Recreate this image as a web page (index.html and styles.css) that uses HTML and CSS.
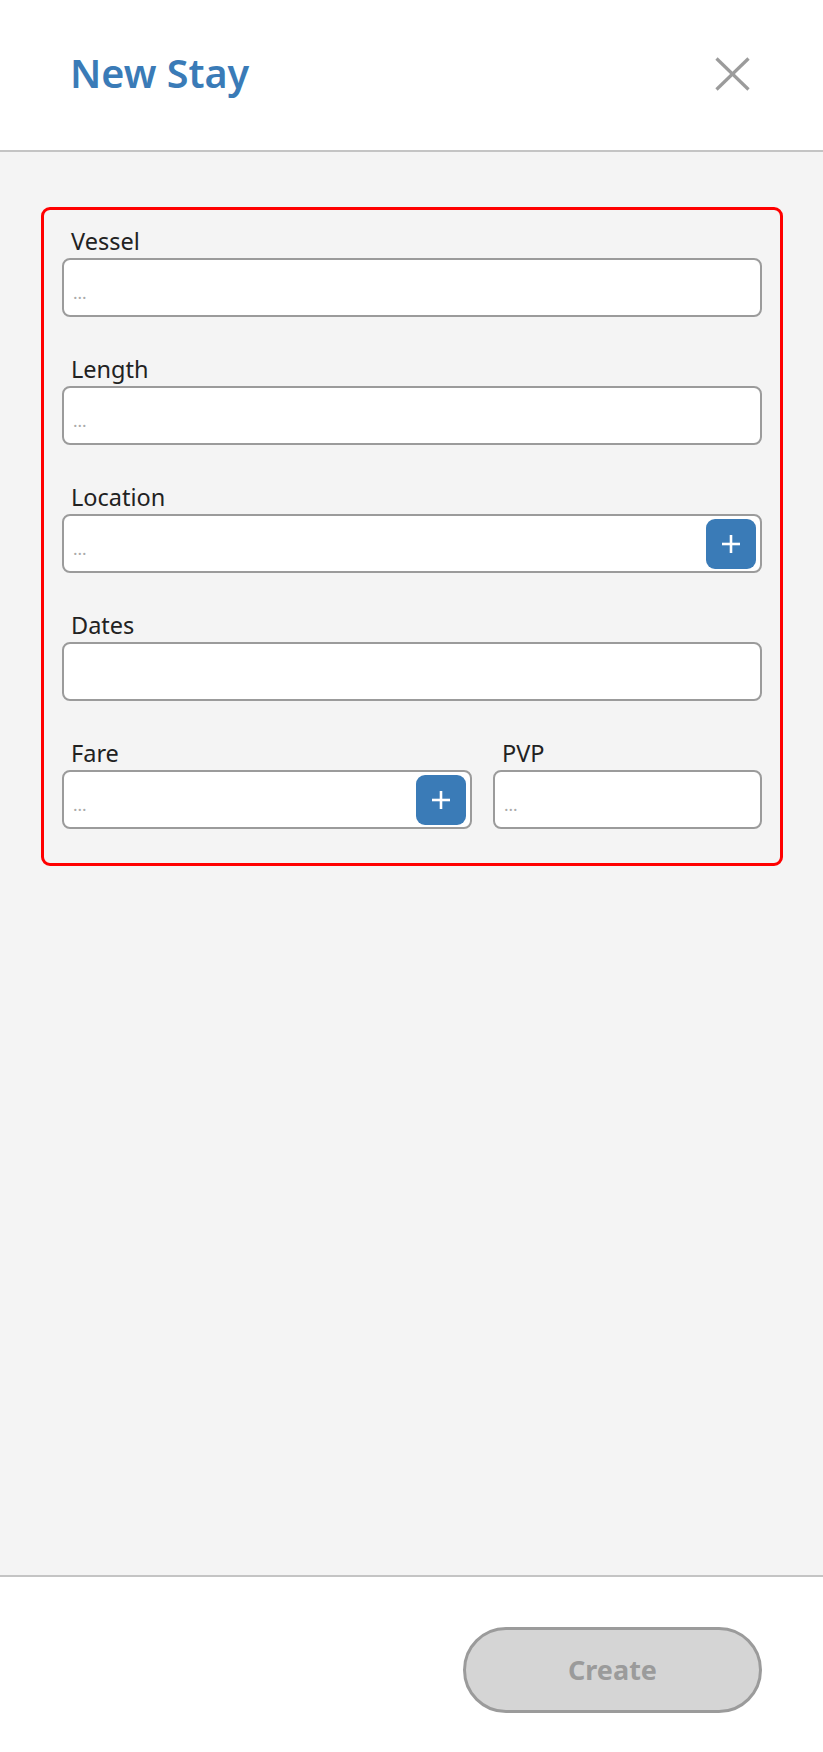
FILE: index.html
```html
<!DOCTYPE html>
<html lang="en">
<head>
    <meta charset="UTF-8">
    <meta name="viewport" content="width=device-width, initial-scale=1.0">
    <title>New Stay</title>
    <link rel="stylesheet" href="styles.css">
</head>
<body>

<!-- Header -->
<header class="modal-header">
    <h1>New Stay</h1>
    <button class="close-btn" aria-label="Close">
        <svg width="35" height="34" viewBox="0 0 35 34">
            <line x1="1.5" y1="1.5" x2="33.5" y2="32.5" />
            <line x1="33.5" y1="1.5" x2="1.5" y2="32.5" />
        </svg>
    </button>
</header>

<main class="modal-body">
    <form class="stay-form">
        <div class="field">
            <label>Vessel</label>
            <input type="text" class="text-input" placeholder="..." />
        </div>

        <div class="field">
            <label>Length</label>
            <input type="text" class="text-input" placeholder="..." />
        </div>

        <div class="field">
            <label>Location</label>
            <div class="input-group">
                <input type="text" placeholder="..." />
                <button type="button" class="add-btn">
                    <svg width="20" height="20" viewBox="0 0 20 20">
                        <line x1="10" y1="1" x2="10" y2="19" />
                        <line x1="1" y1="10" x2="19" y2="10" />
                    </svg>
                </button>
            </div>
        </div>

        <div class="field">
            <label>Dates</label>
            <input type="text" class="text-input" />
        </div>

        <div class="field-row">
            <div class="field">
                <label>Fare</label>
                <div class="input-group">
                    <input type="text" placeholder="..." />
                    <button type="button" class="add-btn">
                        <svg width="20" height="20" viewBox="0 0 20 20">
                            <line x1="10" y1="1" x2="10" y2="19" />
                            <line x1="1" y1="10" x2="19" y2="10" />
                        </svg>
                    </button>
                </div>
            </div>
            <div class="field">
                <label>PVP</label>
                <input type="text" class="text-input" placeholder="..." />
            </div>
        </div>
    </form>
</main>

<!-- Footer -->
<footer class="modal-footer">
    <button class="create-btn" disabled>Create</button>
</footer>

</body>
</html>
```

FILE: styles.css
```css
* {
    box-sizing: border-box;
}

body {
    margin: 0;
    height: 100vh;
    display: flex;
    flex-direction: column;
    font-family: "Noto Sans", "Open Sans", sans-serif;
    color: #222;
    background-color: #fff;
}

.modal-header {
    height: 152px;
    display: flex;
    align-items: center;
    justify-content: space-between;
    padding: 0 73px 4px 70px;
    border-bottom: 2px solid #c4c4c4;
}

.modal-header h1 {
    margin: 0;
    font-size: 39.5px;
    font-weight: 600;
    color: #3a7bb7;
}

.close-btn {
    border: none;
    background: none;
    padding: 0;
    margin-top: 2px;
    display: flex;
    cursor: pointer;
}

.close-btn line {
    stroke: #9b9b9b;
    stroke-width: 3.2;
}

.modal-body {
    flex: 1;
    background-color: #f4f4f4;
    padding: 55px 40px 0 41px;
}

.stay-form {
    border: 3px solid #ff0000;
    border-radius: 9px;
    padding: 17px 18px 34px 18px;
    display: flex;
    flex-direction: column;
    gap: 38px;
}

.field {
    display: flex;
    flex-direction: column;
    gap: 3px;
}

.field label {
    font-size: 23.5px;
    line-height: 28px;
    padding-left: 9px;
    color: #222;
}

.text-input,
.input-group {
    height: 59px;
    border: 2px solid #9b9b9b;
    border-radius: 8px;
    background-color: #fff;
}

.text-input,
.input-group input {
    width: 100%;
    font-family: inherit;
    font-size: 17px;
    padding: 10px 9px 0 9px;
    outline: none;
}

.input-group {
    display: flex;
    align-items: center;
    padding-right: 4px;
}

.input-group input {
    flex: 1;
    min-width: 0;
    height: 100%;
    border: none;
    background: none;
}

input::placeholder {
    color: #aaa;
}

.add-btn {
    width: 50px;
    height: 50px;
    flex-shrink: 0;
    border: none;
    border-radius: 9px;
    background-color: #3a7bb7;
    display: flex;
    align-items: center;
    justify-content: center;
    padding: 0;
    cursor: pointer;
}

.add-btn line {
    stroke: #fff;
    stroke-width: 2.6;
}

.field-row {
    display: grid;
    grid-template-columns: 410px 1fr;
    gap: 21px;
}

.modal-footer {
    height: 177px;
    border-top: 2px solid #c4c4c4;
    display: flex;
    justify-content: flex-end;
    align-items: flex-start;
    padding: 50px 61px 0 0;
}

.create-btn {
    width: 299px;
    height: 86px;
    border: 3px solid #9b9b9b;
    border-radius: 43px;
    background-color: #d5d5d5;
    color: #9b9b9b;
    font-family: inherit;
    font-size: 27px;
    font-weight: 700;
    padding: 0 0 2px 0;
}
```
